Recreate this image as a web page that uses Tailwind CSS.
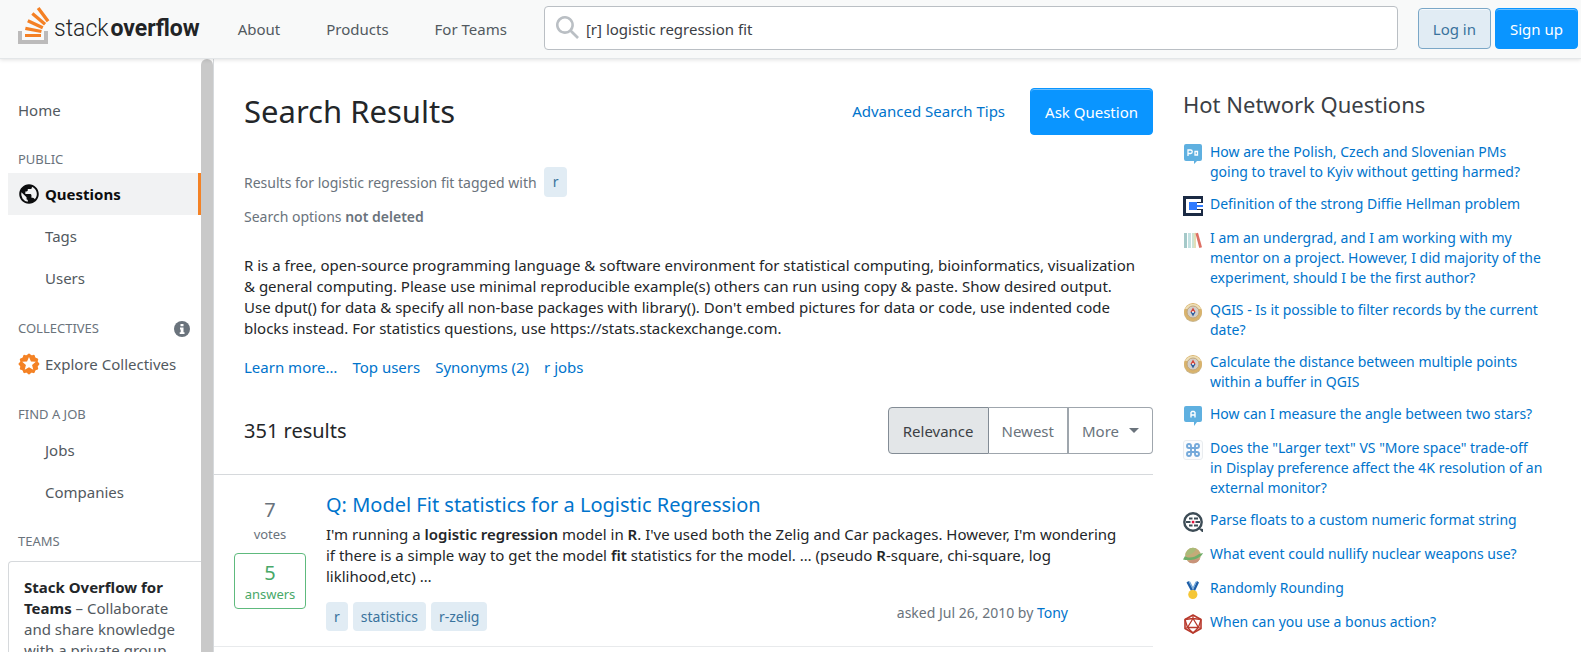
<!DOCTYPE html>
<html lang="en">
<head>
<meta charset="utf-8">
<title>Search Results - Stack Overflow</title>
<script src="https://cdn.jsdelivr.net/npm/@tailwindcss/browser@4"></script>
</head>
<body class="flex h-screen flex-col overflow-hidden bg-white font-['Noto_Sans','Open_Sans',sans-serif] text-[15px] leading-[21px] text-[#232629]">

<header class="relative z-10 flex h-[59px] shrink-0 items-center border-b border-[#e3e6e8] bg-[#f8f9f9] pr-[3px] pl-[18px] shadow-[0_1px_4px_rgba(0,0,0,0.12)]">
  <a href="#" class="flex h-[37px] items-end gap-1 mb-[7px]" aria-label="Stack Overflow">
    <svg width="32" height="37" viewBox="0 0 32 37" class="shrink-0"><path d="M26 33v-9h4v13H0V24h4v9h22z" fill="#BCBBBB"/><path d="m21.5 0-2.7 2 9.9 13.3 2.7-2L21.5 0zM26 18.4 13.3 7.8l2.1-2.5 12.7 10.6-2.1 2.5zM9.1 15.2l15 7 1.4-3-15-7-1.4 3zm14 10.79.68-2.95-16.1-3.35L7 23l16.1 2.99zM23 30H7v-3h16v3z" fill="#F48024"/></svg>
    <span class="flex gap-0.5 font-['Roboto',sans-serif] text-[23px] leading-[30px] text-[#222426]"><span class="font-light">stack</span><span class="font-bold">overflow</span></span>
  </a>
  <nav class="ml-[38px] flex gap-[46px] text-[#525960]">
    <a href="#">About</a><a href="#">Products</a><a href="#">For Teams</a>
  </nav>
  <label class="relative mr-5 mb-[2px] ml-[37px] flex flex-1">
    <svg class="absolute top-[10px] left-3 text-[#babfc4]" width="23" height="23" viewBox="0 0 18 18" fill="currentColor"><path d="m18 16.5-5.14-5.18h-.35a7 7 0 1 0-1.19 1.19v.35L16.5 18l1.5-1.5ZM12 7A5 5 0 1 1 2 7a5 5 0 0 1 10 0Z"/></svg>
    <input type="text" aria-label="Search" value="[r] logistic regression fit" class="h-11 w-full rounded border border-[#babfc4] bg-white pt-[2px] pl-[41px] text-[#3b4045]">
  </label>
  <div class="mb-[2px] flex gap-1">
    <button class="h-[41px] rounded border border-[#7aa7c7] bg-[#e1ecf4] px-[14px] pt-[2px] text-[#39739d] shadow-[inset_0_1px_0_rgba(255,255,255,0.7)]">Log in</button>
    <button class="h-[41px] rounded border border-[#0a95ff] bg-[#0a95ff] px-[14px] pt-[2px] text-white shadow-[inset_0_1px_0_rgba(255,255,255,0.4)]">Sign up</button>
  </div>
</header>

<div class="flex min-h-0 flex-1">
  <aside class="flex w-[214px] shrink-0 overflow-hidden border-r border-[#d6d9dc]">
    <nav class="flex h-full min-w-0 flex-1 flex-col overflow-hidden pl-2 text-[#525960]">
      <a href="#" class="mt-[30px] flex h-[42px] shrink-0 items-center pl-[10px]">Home</a>
      <h2 class="mt-[18px] h-6 shrink-0 pl-[10px] text-[13px] text-[#6a737c]">PUBLIC</h2>
      <a href="#" class="flex h-[42px] shrink-0 items-center gap-[5px] border-r-3 border-[#f48225] bg-[#f1f2f3] pl-[10px] font-bold text-[#0c0d0e]">
        <svg width="22" height="22" viewBox="0 0 18 18" fill="currentColor"><path d="M9 1C4.64 1 1 4.64 1 9c0 4.36 3.64 8 8 8 4.36 0 8-3.64 8-8 0-4.36-3.64-8-8-8ZM8 15.32a6.46 6.46 0 0 1-4.3-2.74 6.46 6.46 0 0 1-.93-5.01L7 11.68v.8c0 .88.12 1.32 1 1.32v1.52Zm5.72-2c-.2-.66-1-1.32-1.72-1.32h-1v-2c0-.44-.56-1-1-1H6V7h1c.44 0 1-.56 1-1V5h2c.88 0 1.4-.72 1.4-1.6v-.33a6.45 6.45 0 0 1 3.83 4.51 6.45 6.45 0 0 1-1.51 5.73v.01Z"/></svg>
        Questions</a>
      <a href="#" class="flex h-[42px] shrink-0 items-center pl-[37px]">Tags</a>
      <a href="#" class="flex h-[42px] shrink-0 items-center pl-[37px]">Users</a>
      <div class="mt-[19px] flex h-[25px] shrink-0 items-start justify-between pr-[11px] pl-[10px]">
        <h2 class="text-[13px] text-[#6a737c]">COLLECTIVES</h2>
        <svg class="mt-[3px]" width="16" height="16" viewBox="0 0 16 16"><circle cx="8" cy="8" r="8" fill="#6a737c"/><path d="M6.5 3h3v2.3h-3zM6 6.6h3.5v4.6h1V13H5.7v-1.8h1V8.4H6z" fill="#fff"/></svg>
      </div>
      <a href="#" class="flex h-[42px] shrink-0 items-center gap-[5px] pl-[10px]">
        <svg width="22" height="22" viewBox="0 0 18 18" fill="#f48225"><path d="M9.86.89a1.14 1.14 0 0 0-1.72 0l-.5.58c-.3.35-.79.48-1.23.33l-.72-.25a1.14 1.14 0 0 0-1.49.85l-.14.76c-.1.45-.45.8-.9.9l-.76.14c-.67.14-1.08.83-.85 1.49l.25.72c.15.44.02.92-.33 1.23l-.58.5a1.14 1.14 0 0 0 0 1.72l.58.5c.35.3.48.79.33 1.23l-.25.72c-.23.66.18 1.35.85 1.49l.76.14c.45.1.8.45.9.9l.14.76c.14.67.83 1.08 1.49.85l.72-.25c.44-.15.92-.02 1.23.33l.5.58c.46.52 1.26.52 1.72 0l.5-.58c.3-.35.79-.48 1.23-.33l.72.25c.66.23 1.35-.18 1.49-.85l.14-.76c.1-.45.45-.8.9-.9l.76-.14c.67-.14 1.08-.83.85-1.49l-.25-.72c-.15-.44-.02-.92.33-1.23l.58-.5c.52-.46.52-1.26 0-1.72l-.58-.5c-.35-.3-.48-.79-.33-1.23l.25-.72a1.14 1.14 0 0 0-.85-1.49l-.76-.14c-.45-.1-.8-.45-.9-.9l-.14-.76a1.14 1.14 0 0 0-1.49-.85l-.72.25c-.44.15-.92.02-1.23-.33l-.5-.58Z"/><path fill="#fff" d="m9 3.2 1.6 3.7 4 .3-3.1 2.6 1 3.9L9 11.6l-3.5 2.1 1-3.9-3.1-2.6 4-.3z"/></svg>
        Explore Collectives</a>
      <h2 class="mt-[19px] h-[25px] shrink-0 pl-[10px] text-[13px] text-[#6a737c]">FIND A JOB</h2>
      <a href="#" class="flex h-[42px] shrink-0 items-center pl-[37px]">Jobs</a>
      <a href="#" class="flex h-[42px] shrink-0 items-center pl-[37px]">Companies</a>
      <h2 class="mt-[18px] h-[30px] shrink-0 pl-[10px] text-[13px] text-[#6a737c]">TEAMS</h2>
      <div class="shrink-0 rounded-tl border-t border-l border-[#d6d9dc] py-[15px] pr-3 pl-[15px]"><strong class="text-[#232629]">Stack Overflow for<br>Teams</strong> – Collaborate<br>and share knowledge<br>with a private group.</div>
    </nav>
    <div class="w-3 shrink-0 rounded-t-full bg-[#c9c9c9]"></div>
  </aside>

  <main class="min-w-0 flex-1">
    <div class="pl-[30px]">
      <div class="flex items-center pt-[29px]">
        <h1 class="flex-1 text-[31px] leading-[47px]">Search Results</h1>
        <a href="#" class="mr-[25px] text-[#0074cc]">Advanced Search Tips</a>
        <button class="h-[47px] rounded border border-[#0a95ff] bg-[#0a95ff] px-[14px] pt-[2px] text-white shadow-[inset_0_1px_0_rgba(255,255,255,0.4)]">Ask Question</button>
      </div>
      <div class="mt-8 flex items-center gap-[7px] text-[14px] text-[#6a737c]">Results for logistic regression fit tagged with <a href="#" class="rounded bg-[#e1ecf4] px-[9px] py-1 leading-[22px] text-[#39739d]">r</a></div>
      <p class="mt-[9px] text-[14px] text-[#6a737c]">Search options <strong class="font-semibold">not deleted</strong></p>
      <p class="mt-7 whitespace-nowrap">R is a free, open-source programming language &amp; software environment for statistical computing, bioinformatics, visualization<br>&amp; general computing. Please use minimal reproducible example(s) others can run using copy &amp; paste. Show desired output.<br>Use dput() for data &amp; specify all non-base packages with library(). Don't embed pictures for data or code, use indented code<br>blocks instead. For statistics questions, use https://stats.stackexchange.com.</p>
      <div class="mt-[18px] flex gap-[15px] text-[#0074cc]"><a href="#">Learn more…</a><a href="#">Top users</a><a href="#">Synonyms (2)</a><a href="#">r jobs</a></div>
      <div class="mt-[29px] flex items-center justify-between">
        <h2 class="text-[20px]">351 results</h2>
        <div class="flex h-[47px] text-[#6a737c]">
          <button class="rounded-l border border-[#838c95] bg-[#e3e6e8] px-[14px] pt-[2px] text-[#3b4045]">Relevance</button>
          <button class="border-y border-[#9fa6ad] px-[13px] pt-[2px]">Newest</button>
          <button class="flex items-center gap-[10px] rounded-r border border-l-2 border-[#9fa6ad] px-[13px] pt-[2px]">More <span class="mb-[3px] border-x-5 border-t-5 border-x-transparent border-t-[#6a737c]"></span></button>
        </div>
      </div>
    </div>
    <article class="mt-5 flex border-y border-t-[#d6d9dc] border-b-[#e8eaec] pt-[15px] pb-[15px]">
      <div class="ml-5 w-[72px] shrink-0 text-center text-[#6a737c]">
        <div class="mt-1.5 text-[20px] leading-[28px]">7</div>
        <div class="text-[13px]">votes</div>
        <div class="mt-2 rounded border border-[#5eba7d] pt-2 pb-1 text-[#48a868]"><div class="text-[20px] leading-[22px]">5</div><div class="text-[13px] leading-5">answers</div></div>
      </div>
      <div class="ml-5 min-w-0 flex-1">
        <h3 class="text-[20px] leading-[30px]"><a href="#" class="text-[#0074cc]">Q: Model Fit statistics for a Logistic Regression</a></h3>
        <p class="mt-1 whitespace-nowrap">I'm running a <b class="font-semibold">logistic regression</b> model in <b class="font-semibold">R</b>. I've used both the Zelig and Car packages. However, I'm wondering<br>if there is a simple way to get the model <b class="font-semibold">fit</b> statistics for the model. … (pseudo <b class="font-semibold">R</b>-square, chi-square, log<br>liklihood,etc) …</p>
        <div class="mt-[15px] flex items-start gap-[5px] pr-[85px] text-[14px]">
          <a href="#" class="rounded bg-[#e1ecf4] px-2 py-1 text-[#39739d]">r</a>
          <a href="#" class="rounded bg-[#e1ecf4] px-2 py-1 text-[#39739d]">statistics</a>
          <a href="#" class="rounded bg-[#e1ecf4] px-2 py-1 text-[#39739d]">r-zelig</a>
          <span class="ml-auto text-[#6a737c]">asked Jul 26, 2010 by <a href="#" class="text-[#0074cc]">Tony</a></span>
        </div>
      </div>
    </article>
  </main>

  <aside class="w-[428px] shrink-0 pt-[30px] pr-6 pl-[30px]">
    <h2 class="text-[22px] leading-[30px] text-[#3b4045]">Hot Network Questions</h2>
    <ul class="mt-[23px] flex flex-col gap-3 text-[14px] leading-5 whitespace-nowrap text-[#0074cc]">
      <li class="flex min-h-[22px] gap-[7px]">
        <svg class="mt-0.5 shrink-0" width="20" height="20" viewBox="0 0 20 20"><path d="M3 0h14a2 2 0 0 1 2 2v13a2 2 0 0 1-2 2h-3l-3 3v-3H3a2 2 0 0 1-2-2V2a2 2 0 0 1 2-2z" fill="#5fb0e0"/><path d="M5 12V6h2.500a1.700 1.700 0 0 1 0 3.500H5M12 7.500h2.500v3.500H12z" fill="none" stroke="#fff" stroke-width="1.300"/></svg>
        <a href="#">How are the Polish, Czech and Slovenian PMs<br>going to travel to Kyiv without getting harmed?</a></li>
      <li class="flex min-h-[22px] gap-[7px]">
        <svg class="mt-0.5 shrink-0" width="20" height="20" viewBox="0 0 20 20"><path d="M0 0h20v20H0z" fill="#1b2a44"/><path d="M3 3h15v3H6v8h12v3H3z" fill="#fff"/><path d="M14 7h6v6h-6z" fill="#fff"/><path d="M6 6h8v3h6v2h-6v3H6z" fill="#2f7bff"/></svg>
        <a href="#">Definition of the strong Diffie Hellman problem</a></li>
      <li class="flex min-h-[22px] gap-[7px]">
        <svg class="mt-0.5 shrink-0" width="20" height="20" viewBox="0 0 20 20"><path d="M1 3h3v15H1z" fill="#a5c9c9"/><path d="M5 3h3v15H5z" fill="#c3e2e2"/><path d="M9 3h2v15H9z" fill="#cde3d4"/><path d="m11 3 2-.3V18h-2z" fill="#e3dfb8"/><path d="m12.500 3.500 2.500-.8 4 14.500-2.700.8z" fill="#dd6f63"/></svg>
        <a href="#">I am an undergrad, and I am working with my<br>mentor on a project. However, I did majority of the<br>experiment, should I be the first author?</a></li>
      <li class="flex min-h-[22px] gap-[7px]">
        <svg class="mt-0.5 shrink-0" width="20" height="20" viewBox="0 0 20 20"><circle cx="10" cy="11" r="9" fill="#c9b791"/><circle cx="10" cy="10" r="9" fill="#d9b36c"/><path d="M2 7a9 9 0 0 1 16 0z" fill="#efe0b8"/><circle cx="10" cy="10" r="6" fill="#d3cfcb" stroke="#c0a57a"/><path d="m10 5.500 2.500 4.500h-5z" fill="#d4433a"/><path d="m10 14.500 2.500-4.500h-5z" fill="#2f5e9e"/><circle cx="10" cy="10" r="1" fill="#fff"/></svg>
        <a href="#">QGIS - Is it possible to filter records by the current<br>date?</a></li>
      <li class="flex min-h-[22px] gap-[7px]">
        <svg class="mt-0.5 shrink-0" width="20" height="20" viewBox="0 0 20 20"><circle cx="10" cy="11" r="9" fill="#c9b791"/><circle cx="10" cy="10" r="9" fill="#d9b36c"/><path d="M2 7a9 9 0 0 1 16 0z" fill="#efe0b8"/><circle cx="10" cy="10" r="6" fill="#d3cfcb" stroke="#c0a57a"/><path d="m10 5.500 2.500 4.500h-5z" fill="#d4433a"/><path d="m10 14.500 2.500-4.500h-5z" fill="#2f5e9e"/><circle cx="10" cy="10" r="1" fill="#fff"/></svg>
        <a href="#">Calculate the distance between multiple points<br>within a buffer in QGIS</a></li>
      <li class="flex min-h-[22px] gap-[7px]">
        <svg class="mt-0.5 shrink-0" width="20" height="20" viewBox="0 0 20 20"><path d="M3 0h14a2 2 0 0 1 2 2v12a2 2 0 0 1-2 2h-3l-3 4v-4H3a2 2 0 0 1-2-2V2a2 2 0 0 1 2-2z" fill="#5fb0e0"/><path d="M8 11.500V6.500l1-1h2l1 1v5M8 9h4" fill="none" stroke="#fff" stroke-width="1.400"/></svg>
        <a href="#">How can I measure the angle between two stars?</a></li>
      <li class="flex min-h-[22px] gap-[7px]">
        <svg class="mt-0.5 shrink-0" width="20" height="20" viewBox="0 0 20 20" fill="none"><rect x=".5" y=".5" width="19" height="19" rx="2.500" fill="#fbfcfd" stroke="#e9ecef"/><path d="M8 8H6a2 2 0 1 1 2-2v8a2 2 0 1 1-2-2h8a2 2 0 1 1-2 2V6a2 2 0 1 1 2 2z" stroke="#74a9da" stroke-width="1.900"/></svg>
        <a href="#">Does the "Larger text" VS "More space" trade-off<br>in Display preference affect the 4K resolution of an<br>external monitor?</a></li>
      <li class="flex min-h-[22px] gap-[7px]">
        <svg class="mt-0.5 shrink-0" width="20" height="20" viewBox="0 0 20 20" fill="none"><circle cx="10" cy="10" r="8.700" stroke="#3d4c56" stroke-width="2.400"/><path d="m15 16 4 4h1v-3z" fill="#3d4c56"/><path d="M6 6.500h3.500M11 6.500h4M3 10h4.500M12.500 10H17M6 13.500h3.500M11 13.500h4" stroke="#3d4c56" stroke-width="2"/><path d="M8.800 8.800h2.500v2.500H8.800z" fill="#e0103a"/></svg>
        <a href="#">Parse floats to a custom numeric format string</a></li>
      <li class="flex min-h-[22px] gap-[7px]">
        <svg class="mt-0.5 shrink-0" width="20" height="20" viewBox="0 0 20 20"><circle cx="10" cy="9.500" r="7.800" fill="#c4ab78"/><path d="M4 5a7.800 7.800 0 0 1 9-2.500c-1 4-5 6.500-10.500 7A8 8 0 0 1 4 5z" fill="#a9bb78"/><path d="M5 15.500A7.800 7.800 0 0 0 17 13l-4-1z" fill="#c9937a"/><path d="M0 13.500 2 10c3 2.500 9 2 14-2l4-1c-1 3-5 5.500-9 6.500-4 .8-8 .8-11 0z" fill="#6fae68"/></svg>
        <a href="#">What event could nullify nuclear weapons use?</a></li>
      <li class="flex min-h-[22px] gap-[7px]">
        <svg class="mt-0.5 shrink-0" width="20" height="20" viewBox="0 0 20 20"><path d="m3.500 2.500 2-1.500L10 9.500 8 11zM16 2.500 14 1l-4 8.500 2 1.500z" fill="#1f5fa8"/><path d="m5.500 1 1.800.8L10 7l-.6 2zM14 1l-1.500.8L10 7l.6 2z" fill="#6fa5d8"/><circle cx="9.800" cy="14.500" r="4.600" fill="#f5c636"/></svg>
        <a href="#">Randomly Rounding</a></li>
      <li class="flex min-h-[22px] gap-[7px]">
        <svg class="mt-0.5 shrink-0" width="20" height="20" viewBox="0 0 20 20" fill="none" stroke="#b8392c" stroke-width="1.600" stroke-linejoin="round"><path d="m10 1 8 4.500v9L10 19l-8-4.500v-9z"/><path d="M10 4.500 4.500 13.500h11zM10 1v3.500M2 5.500l8-1 8 1M2 5.500l2.500 8L2 14.500M18 5.500l-2.500 8 2.500 1M4.500 13.500 10 19l5.500-5.500" stroke-width="1.300"/></svg>
        <a href="#">When can you use a bonus action?</a></li>
    </ul>
  </aside>
</div>
</body>
</html>
